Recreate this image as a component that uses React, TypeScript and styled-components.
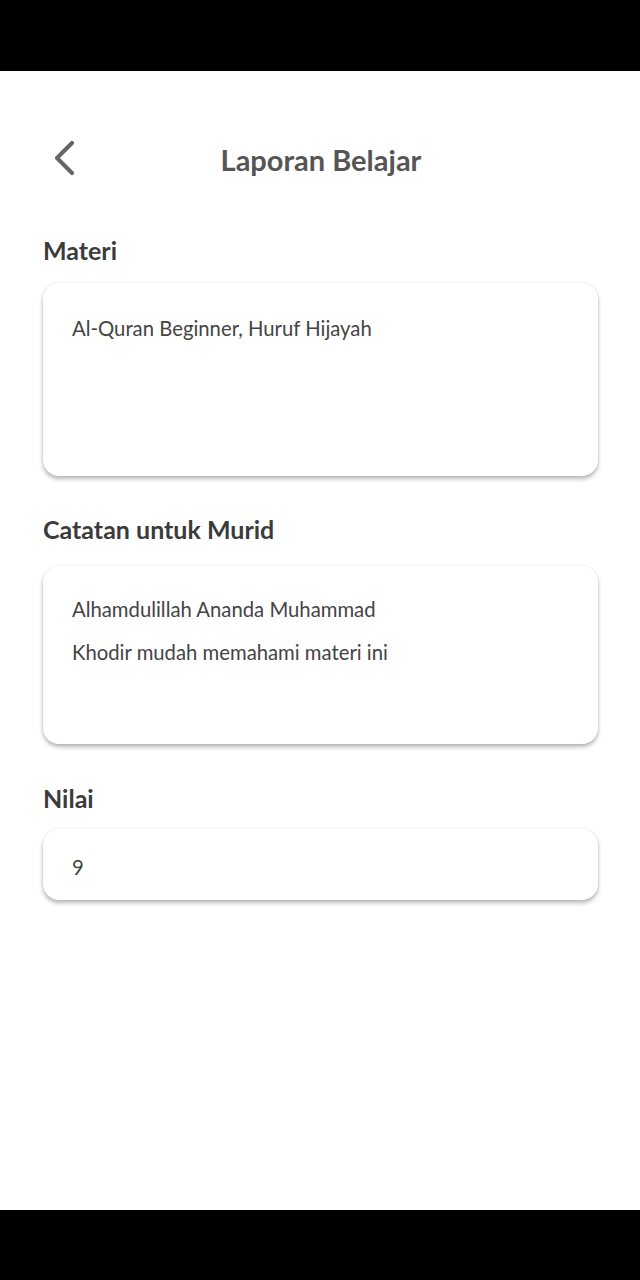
import React from "react";
import styled, { createGlobalStyle } from "styled-components";

const Global = createGlobalStyle`
  html, body { margin: 0; padding: 0; background: #000; }
  body { font-family: Lato, "Open Sans", sans-serif; }
`;

const Screen = styled.div`
  width: 640px;
  height: 1280px;
  display: flex;
  flex-direction: column;
  background: #000;
`;

const StatusBar = styled.div`
  height: 71px;
  background: #000;
  flex: none;
`;

const NavBar = styled.div`
  height: 1px;
  background: #000;
  flex: 1;
`;

const Content = styled.main`
  flex: none;
  height: 1139px;
  background: #fff;
  padding: 0 42px 0 43px;
  box-sizing: border-box;
  display: flex;
  flex-direction: column;
`;

const Header = styled.header`
  display: grid;
  grid-template-columns: 60px 1fr 60px;
  align-items: center;
  height: 58px;
  margin-top: 60px;
  margin-left: -43px;
  margin-right: -42px;
  padding: 0 0 0 52px;
`;

const BackButton = styled.button`
  border: none;
  background: none;
  padding: 0;
  width: 30px;
  height: 40px;
  display: flex;
  align-items: center;
  justify-content: flex-start;
  margin-top: -5px;
  cursor: pointer;
`;

const Title = styled.h1`
  margin: 0;
  text-align: center;
  font-size: 29px;
  font-weight: 700;
  color: #555;
  margin-left: -50px;
  line-height: 34px;
`;

const Label = styled.h2<{ $top: number }>`
  margin: ${(p) => p.$top}px 0 0 0;
  font-size: 25px;
  font-weight: 700;
  color: #3b3b3b;
  line-height: 28px;
`;

const Card = styled.div<{ $h: number; $gap: number; $pad: number }>`
  margin-top: ${(p) => p.$gap}px;
  height: ${(p) => p.$h}px;
  box-sizing: border-box;
  background: #fff;
  border-radius: 16px;
  box-shadow: 0 3px 4px rgba(0, 0, 0, 0.28), 0 0 3px rgba(0, 0, 0, 0.08);
  padding: ${(p) => p.$pad}px 29px 0;
  display: flex;
  flex-direction: column;
  gap: 19px;
`;

const Line = styled.p`
  margin: 0;
  font-size: 20.3px;
  line-height: 24px;
  color: #444;
`;

export default function App() {
  return (
    <>
      <Global />
      <Screen>
        <StatusBar />
        <Content>
          <Header>
            <BackButton aria-label="Kembali">
              <svg width="24" height="36" viewBox="0 0 24 36" fill="none">
                <path d="M20 3 L5 18 L20 33" stroke="#666" strokeWidth="4.2" strokeLinecap="round" strokeLinejoin="round" />
              </svg>
            </BackButton>
            <Title>Laporan Belajar</Title>
            <span />
          </Header>
          <Label $top={47}>Materi</Label>
          <Card $h={193} $gap={19} $pad={33}>
            <Line>Al-Quran Beginner, Huruf Hijayah</Line>
          </Card>
          <Label $top={39}>Catatan untuk Murid</Label>
          <Card $h={178} $gap={23} $pad={31}>
            <Line>Alhamdulillah Ananda Muhammad</Line>
            <Line>Khodir mudah memahami materi ini</Line>
          </Card>
          <Label $top={40}>Nilai</Label>
          <Card $h={71} $gap={17} $pad={26}>
            <Line>9</Line>
          </Card>
        </Content>
        <NavBar />
      </Screen>
    </>
  );
}
